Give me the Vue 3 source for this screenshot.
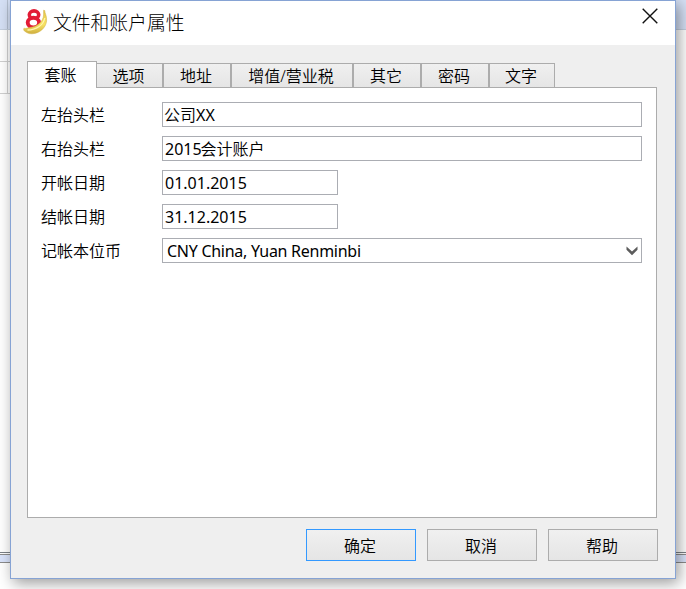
<script setup>
import { ref } from 'vue'

const tabs = [
  { label: '套账', width: 70 },
  { label: '选项', width: 66 },
  { label: '地址', width: 68 },
  { label: '增值/营业税', width: 122 },
  { label: '其它', width: 68 },
  { label: '密码', width: 68 },
  { label: '文字', width: 66 },
]
const active = ref(0)
const fields = [
  { label: '左抬头栏', han: '公司', tail: 'XX' },
  { label: '右抬头栏', value: '2015', han: '会计账户' },
  { label: '开帐日期', value: '01.01.2015', short: true },
  { label: '结帐日期', value: '31.12.2015', short: true },
  { label: '记帐本位币', value: 'CNY China, Yuan Renminbi', select: true },
]
const buttons = ['确定', '取消', '帮助']
</script>

<template>
  <div class="screen">
    <div class="backdrop">
      <div class="band"></div>
      <div class="rows"><div class="grid"></div></div>
      <div class="splitter"></div>
    </div>
    <div class="dialog">
      <header class="titlebar">
        <svg class="logo" width="26" height="28" viewBox="0 0 26 28">
          <defs>
            <linearGradient id="peel" x1="0" y1="0" x2="0" y2="1">
              <stop offset="0" stop-color="#e3c549" />
              <stop offset=".6" stop-color="#f7e263" />
              <stop offset="1" stop-color="#cfae3e" />
            </linearGradient>
          </defs>
          <ellipse cx="11" cy="6.8" rx="4.7" ry="3.9" fill="#fff" stroke="#e21b36" stroke-width="3.6" />
          <ellipse cx="10.4" cy="14.6" rx="5.7" ry="4.8" fill="#fff" stroke="#e21b36" stroke-width="3.9" />
          <path d="M20.6 2.2 L21.8 2.6 C21.6 5 24.1 8 23.6 13 C22.8 20 16.5 25.5 9 25.8 C5.5 26 3 24.4 .7 22.2 L.9 20.2 C3 21 5 19.6 7 19.5 C14 18.8 20.2 14 20.6 7 Z" fill="url(#peel)" stroke="#d0b045" stroke-width=".5" />
          <path d="M4.5 22 C13 22 20.4 17.4 21.8 10" fill="none" stroke="#fff6b0" stroke-width="1.3" />
        </svg>
        <h1>文件和账户属性</h1>
        <svg class="close" width="16" height="16" viewBox="0 0 16 16">
          <path d="M.7 .7 L15.3 15.3 M15.3 .7 L.7 15.3" stroke="#111" stroke-width="1.4" />
        </svg>
      </header>
      <main class="content">
        <nav class="tabs">
          <button
            v-for="(tab, i) in tabs"
            :key="tab.label"
            class="tab"
            :class="{ active: i === active }"
            :style="{ width: tab.width + 'px' }"
            @click="active = i"
          >{{ tab.label }}</button>
        </nav>
        <section class="panel">
          <div v-for="f in fields" :key="f.label" class="row">
            <span class="label">{{ f.label }}</span>
            <div class="field" :class="{ short: f.short, select: f.select }">
              <span class="value">{{ f.value }}<span v-if="f.han" class="han">{{ f.han }}</span>{{ f.tail }}</span>
              <svg v-if="f.select" width="12" height="10" viewBox="0 0 12 10">
                <path d="M.5 .5 L6 5.6 L11.5 .5 V3.8 L6 9.3 L.5 3.8 Z" fill="#5c5c5c" />
              </svg>
            </div>
          </div>
        </section>
        <footer class="actions">
          <button v-for="(b, i) in buttons" :key="b" class="btn" :class="{ primary: i === 0 }">{{ b }}</button>
        </footer>
      </main>
    </div>
  </div>
</template>

<style>
body {
  margin: 0;
  overflow: hidden;
}
</style>

<style scoped>
* {
  box-sizing: border-box;
}
.screen {
  position: relative;
  width: 686px;
  height: 589px;
  overflow: hidden;
  padding-left: 10px;
  font: 16px/24px "Noto Sans", "Noto Sans CJK SC", sans-serif;
  color: #000;
}
.backdrop {
  position: absolute;
  inset: 0;
  display: flex;
  flex-direction: column;
  background: #fff;
}
.band {
  height: 30px;
  border-bottom: 1px solid #c4cfdf;
  background: linear-gradient(#b4bfd0, #b4bfd0) 7px 0 / 1px 100% no-repeat, #d5e0f5;
}
.rows {
  height: 522px;
  background: #fff;
}
.grid {
  width: 10px;
  height: 64px;
  border-bottom: 1px solid #d0d0d0;
  background:
    linear-gradient(#d0d0d0, #d0d0d0) 7px 0 / 1px 100% no-repeat,
    linear-gradient(#d0d0d0, #d0d0d0) 0 31px / 100% 1px no-repeat;
}
.splitter {
  height: 11px;
  border-top: 1px solid #7b8087;
  border-bottom: 1px solid #8c8c8c;
  background: linear-gradient(#fff 1px, #8c8c8c 1px, #8c8c8c 2px, #dae4fb 2px);
}
.dialog {
  position: relative;
  width: 666px;
  height: 579px;
  border: 1px solid #86a3d4;
  background: #efefef;
  box-shadow: 3px 4px 14px rgba(0, 0, 0, 0.4);
}
.titlebar {
  display: flex;
  align-items: flex-start;
  height: 44px;
  padding: 7px 17px 0 12px;
  background: #fff;
}
h1 {
  flex: 1;
  margin: 1px 0 0 4px;
  font-size: 18.8px;
  line-height: 28px;
  font-weight: 300;
  color: #000;
}
.content {
  padding: 16px 17px 0 16px;
}
.tabs {
  display: flex;
  align-items: flex-end;
  height: 26px;
}
.tab {
  height: 24px;
  padding: 0 2px 0 0;
  border: 1px solid #acacac;
  border-bottom: 0;
  background: linear-gradient(#f0f0f0, #e5e5e5);
  font: inherit;
  font-weight: 350;
  line-height: 24px;
  color: #000;
}
.tab.active {
  position: relative;
  height: 27px;
  margin-bottom: -1px;
  padding: 0 3px 1px 0;
  background: #fff;
}
.tab.active + .tab {
  border-left: 0;
}
.panel {
  display: flex;
  flex-direction: column;
  gap: 9px;
  width: 630px;
  height: 431px;
  padding: 14px;
  border: 1px solid #acacac;
  background: #fff;
}
.row {
  display: flex;
  height: 25px;
}
.label {
  width: 121px;
  margin-left: -1px;
  line-height: 26px;
  font-weight: 350;
}
.field {
  display: flex;
  flex: 1;
  height: 25px;
  padding-left: 2px;
  border: 1px solid #abadb3;
  background: #fff;
}
.han {
  margin-left: -1px;
  font-weight: 350;
}
.field.short {
  flex: none;
  width: 176px;
}
.field.select {
  justify-content: space-between;
  padding: 0 3px 0 4px;
}
.field.select .value {
  letter-spacing: -0.27px;
}
.field.select svg {
  margin-top: 7px;
}
.actions {
  display: flex;
  justify-content: flex-end;
  gap: 11px;
  margin-top: 11px;
}
.btn {
  width: 110px;
  height: 32px;
  padding: 1px 2px 0 0;
  border: 1px solid #acacac;
  background: linear-gradient(#f0f0f0, #e5e5e5);
  font: inherit;
  font-weight: 350;
  color: #000;
}
.btn.primary {
  border-color: #3399ff;
}
</style>
